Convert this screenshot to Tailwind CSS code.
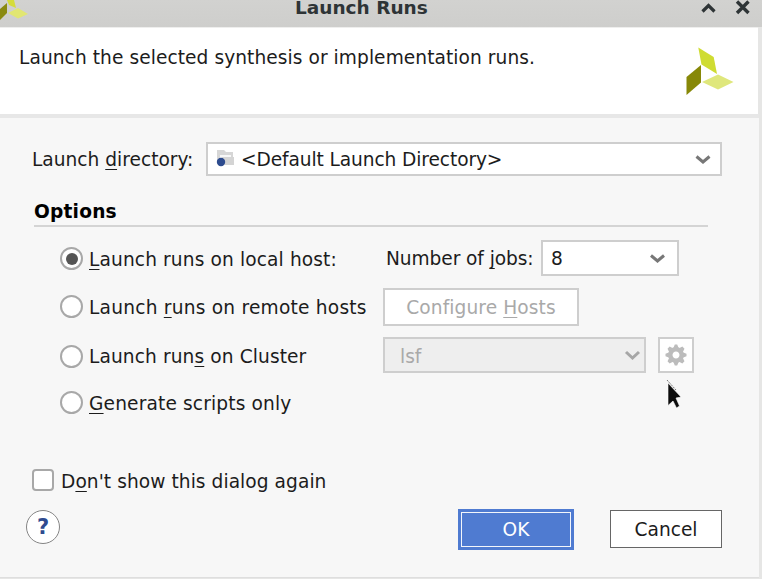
<!DOCTYPE html>
<html lang="en">
<head>
<meta charset="utf-8">
<title>Launch Runs</title>
<script src="https://cdn.jsdelivr.net/npm/@tailwindcss/browser@4"></script>
</head>
<body class="w-[762px] h-[579px] overflow-hidden bg-[#e6e6e5] font-['DejaVu_Sans',sans-serif] text-[18.6px] leading-6 text-[#1c1c1c] whitespace-nowrap">
<div class="relative flex flex-col w-[762px] h-[579px] overflow-hidden">
  <header class="h-[27px] shrink-0 flex items-start bg-linear-to-b from-[#d2d2d0] to-[#cececc]">
    <svg class="w-[30px] h-[27px] shrink-0" viewBox="0 0 30 27"><path d="M7 0H14L16 8L9 5Z" fill="#d5dc3b"/><path d="M0 9L7 3V13L0 20Z" fill="#8a8a10"/><path d="M8 13L18 8L28 14L18 18.500Z" fill="#e1e672"/></svg>
    <h1 class="ml-[265px] -mt-[4px] w-[390px] font-bold text-[18.5px] text-[#2e3436]">Launch Runs</h1>
    <svg class="w-[77px] h-[27px] shrink-0" viewBox="685 0 77 27" fill="none" stroke="#2e3436"><path d="M702.500 11.500L708.500 5.500L714.500 11.500" stroke-width="3.200"/><path d="M737 1.500L748.500 13M748.500 1.500L737 13" stroke-width="3.400"/></svg>
  </header>
  <section class="flex justify-between h-[87px] w-[758px] shrink-0 bg-white border-t border-[#eeeeed] pl-[19px] pr-[23px]">
    <p class="mt-[18px] tracking-[0.066px]">Launch the selected synthesis or implementation runs.</p>
    <svg class="mt-[18px] w-[50px] h-[52px]" viewBox="685 46 50 52"><path d="M698.300 47.500L713.700 57L717 74L701.500 64.500Z" fill="#cfdc32"/><path d="M686.500 77L701 65V82.500L686.500 95Z" fill="#878808"/><path d="M702 82L718 74.500L733.500 82L718 89.500Z" fill="#dfe77c"/></svg>
  </section>
  <main class="w-[758.500px] h-[464px] shrink-0 bg-[#f7f7f7] border-t-4 border-b border-t-[#e7e7e7] border-b-[#dedede]">
    <div class="flex mt-[24px] ml-8 h-[34px]">
      <label class="w-[174px] mt-[6px]">Launch <span class="underline decoration-1 underline-offset-3 [text-decoration-skip-ink:none]">d</span>irectory:</label>
      <div class="flex w-[516px] border-2 border-[#cecece] bg-white">
        <svg class="w-[33px] h-[30px]" viewBox="208 144 33 30"><path d="M217 150H224L226 152H233V162H217Z" fill="#d6d6d6"/><path d="M220 155H231V158H220Z" fill="#f7f7f7"/><path d="M222 157H234V165H220Z" fill="#d4d4d4"/><circle cx="221" cy="162" r="4.200" fill="#2d4b8e"/></svg>
        <span class="mt-[4px] w-[451px] tracking-[-0.1px]">&lt;Default Launch Directory&gt;</span>
        <svg class="w-[24px] h-[30px]" viewBox="692 144 24 30"><path d="M696.500 156.500L703 162L709.500 156.500" fill="none" stroke="#777" stroke-width="3"/></svg>
      </div>
    </div>
    <h2 class="ml-[34px] mt-[24px] w-[674px] h-[27px] border-b-2 border-[#d4d4d4] font-bold text-black tracking-[0.2px]">Options</h2>

    <div class="flex mt-[13px] ml-[60px] h-[37px]">
      <div class="w-[326px] flex"><i class="mt-[7px] size-[23px] shrink-0 rounded-full border-2 border-[#a8a8a8] bg-white flex items-center justify-center"><b class="size-[12px] rounded-full bg-[#555]"></b></i>
        <label class="ml-[6px] mt-[8px] tracking-[0.12px]"><span class="underline decoration-1 underline-offset-3 [text-decoration-skip-ink:none]">L</span>aunch runs on local host:</label></div>
      <label class="mt-[7px] w-[155px] tracking-[-0.08px]">Number of <span class="underline decoration-1 underline-offset-3 [text-decoration-skip-ink:none]">j</span>obs:</label>
      <div class="flex w-[138px] h-[36px] border-2 border-[#cecece] bg-white"><span class="ml-[8px] mt-[5px] w-[96px]">8</span>
        <svg class="w-[20px] h-[32px]" viewBox="647 242 20 32"><path d="M651 255.500L657.500 261L664 255.500" fill="none" stroke="#777" stroke-width="3"/></svg></div>
    </div>
    <div class="flex mt-[11px] ml-[60px] h-[38px]">
      <div class="w-[323px] flex"><i class="mt-[7px] size-[23px] shrink-0 rounded-full border-2 border-[#a8a8a8] bg-white"></i>
        <label class="ml-[6px] mt-[8px] tracking-[0.22px]">Launch <span class="underline decoration-1 underline-offset-3 [text-decoration-skip-ink:none]">r</span>uns on remote hosts</label></div>
      <button class="w-[196px] h-[38px] border-2 border-[#cecece] bg-white text-[#a9a9a9] tracking-[0.1px] pt-px">Configure <span class="underline decoration-1 underline-offset-3 [text-decoration-skip-ink:none]">H</span>osts</button>
    </div>
    <div class="flex mt-[11px] ml-[60px] h-[36px]">
      <div class="w-[323px] flex"><i class="mt-[8px] size-[23px] shrink-0 rounded-full border-2 border-[#a8a8a8] bg-white"></i>
        <label class="ml-[6px] mt-[8px] tracking-[0.1px]">Launch run<span class="underline decoration-1 underline-offset-3 [text-decoration-skip-ink:none]">s</span> on Cluster</label></div>
      <div class="flex w-[263px] h-[36px] border-2 border-[#cecece] bg-[#eee] text-[#a9a9a9]"><span class="ml-[15px] mt-[6px] w-[222px]">lsf</span>
        <svg class="w-[20px] h-[32px]" viewBox="622 340 20 32"><path d="M626 353L632.500 359L639 353" fill="none" stroke="#a6a6a6" stroke-width="3"/></svg></div>
      <button class="ml-[12px] w-[36px] h-[36px] border-2 border-[#cecece] bg-white"><svg class="size-[32px]" viewBox="-16 -16 32 32"><g fill="#bcbcbc"><path d="M-1.200 -10.500H1.200L3 -6H-3ZM-1.200 10.500H1.200L3 6H-3Z"/><path d="M-10.500 -1.200V1.200L-6 3V-3ZM10.500 -1.200V1.200L6 3V-3Z"/><path transform="rotate(45)" d="M-1.500 -10.500H1.500L3 -6H-3ZM-1.500 10.500H1.500L3 6H-3Z"/><path transform="rotate(45)" d="M-10.500 -1.500V1.500L-6 3V-3ZM10.500 -1.500V1.500L6 3V-3Z"/></g><circle r="5.700" fill="none" stroke="#bcbcbc" stroke-width="4.400"/></svg></button>
    </div>
    <div class="flex mt-[18px] ml-[60px] h-[24px]"><i class="size-[23px] shrink-0 rounded-full border-2 border-[#a8a8a8] bg-white"></i>
      <label class="ml-[6px] mt-px tracking-[0.14px]"><span class="underline decoration-1 underline-offset-3 [text-decoration-skip-ink:none]">G</span>enerate scripts only</label></div>

    <div class="flex mt-[54px] ml-[32px] h-[24px]"><i class="size-[22px] shrink-0 rounded-[4px] border-2 border-[#a8a8a8] bg-white"></i>
      <label class="ml-[7px] mt-px tracking-[0.06px]">D<span class="underline decoration-1 underline-offset-3 [text-decoration-skip-ink:none]">o</span>n't show this dialog again</label></div>

    <footer class="flex mt-[16px] ml-[26px] h-[41px]">
      <button class="mt-[1px] size-[34px] rounded-full border-[1.5px] border-[#858585] bg-white text-[#2f4b8f] font-bold text-[21px] leading-[32px]">?</button>
      <button class="ml-[398px] w-[116px] h-[41px] bg-[#4f7bd1] p-[3px]"><span class="block h-[35px] border border-[#f2f5fb] text-white leading-[34px]">OK</span></button>
      <button class="ml-[36px] mt-[1px] w-[112px] h-[38px] border-[1.5px] border-[#666] bg-white pt-px">Cancel</button>
    </footer>
  </main>
  <svg class="absolute left-[664px] top-[378px] w-[20px] h-[34px]" viewBox="664 378 20 34"><path d="M668 383L681 397L676 398L679.500 406L676.500 408L673 401L668 405.500Z" fill="#0c0c0c" stroke="#fff" stroke-width=".6"/><path d="M667 380L676 390" stroke="#555" stroke-width=".8" stroke-dasharray="2 1"/></svg>
</div>
</body>
</html>
